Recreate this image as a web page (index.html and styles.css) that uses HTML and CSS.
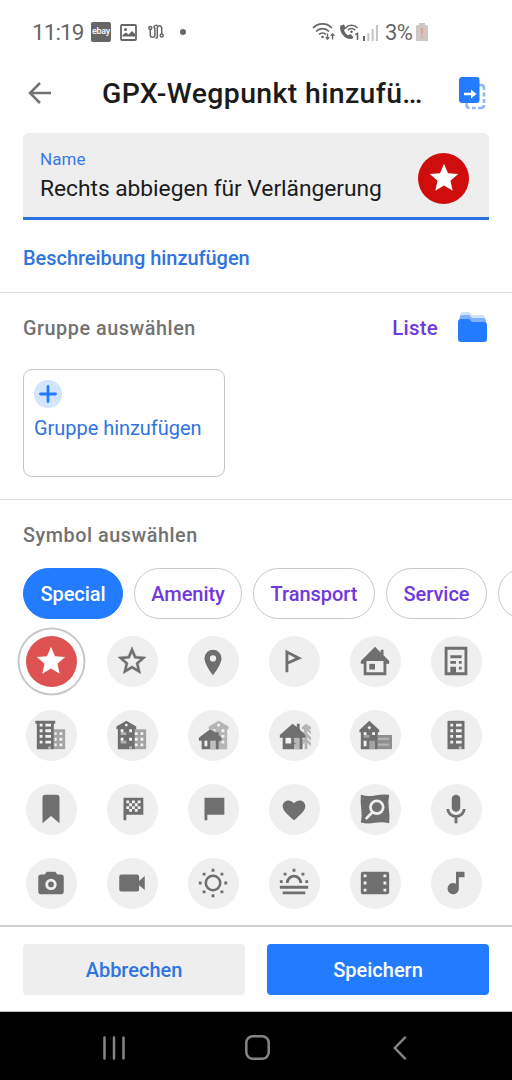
FILE: index.html
```html
<!DOCTYPE html>
<html lang="de">
<head>
    <meta charset="UTF-8">
    <title>GPX-Wegpunkt hinzufügen</title>
    <link rel="stylesheet" href="styles.css">
</head>
<body>
    <div class="status">
        <span class="time">11:19</span>
        <span class="ebay">ebay</span>
        <svg class="s-img" width="17" height="17" viewBox="0 0 17 17"><rect x="1" y="1" width="15" height="15" rx="1" fill="none" stroke="#666" stroke-width="1.8"/><circle cx="5.500" cy="5.500" r="1.500" fill="#666"/><path d="M2.500 12.500V11L6 8.500 8.500 10.500 12 7l3 3v2.500z" fill="#666"/></svg>
        <svg class="s-route" width="16" height="16" viewBox="0 0 16 16" fill="none" stroke="#666" stroke-width="1.500"><circle cx="2.300" cy="4" r="1.500"/><circle cx="13.700" cy="11.500" r="1.500"/><path d="M2.300 5.500v5.500a2.300 2.300 0 0 0 4.600 0V4.500L5.700 2.800M5.700 2.800Q7 1 9.300 1.200M9.300 14V4a2.200 2.200 0 0 1 4.400 0v6M9.300 14H7.500"/></svg>
        <i class="dot"></i>
        <svg class="s-wifi" width="24" height="18" viewBox="0 0 24 18" fill="none" stroke="#666" stroke-width="1.700"><path d="M1 5a13 13 0 0 1 19 0M4 8.500a9 9 0 0 1 13 0M7 11.500a5 5 0 0 1 7 0"/><circle cx="10.500" cy="14" r="1.300" fill="#666" stroke="none"/><path d="M15.500 10.500v5.500M13.700 14.200l1.800 1.900 1.800-1.900M20.500 16.500v-5.500M18.700 12.800l1.800-1.900 1.800 1.900" stroke-width="1.300"/></svg>
        <svg class="s-call" width="21" height="18" viewBox="0 0 21 18"><path d="M1.500 2.500C-.5 9 6 17 13 16l1.500-2-3-3-2.500 1.200C7 11 5.500 9 5 7l2-1.500L5 1.500z" fill="#666"/><path d="M6.500 5a8 8 0 0 1 12 0M8.800 7.200a5 5 0 0 1 7.400 0" fill="none" stroke="#666" stroke-width="1.500"/><circle cx="12.500" cy="8.800" r="1.300" fill="#666"/><path d="M16.200 11.700l2.300-1.200V17" fill="none" stroke="#666" stroke-width="1.500"/></svg>
        <svg class="s-bars" width="15" height="17" viewBox="0 0 15 17" fill="#c4c4c4"><path d="M0 12h2v5H0z" fill="#666"/><path d="M4.300 9h2v8h-2zM8.600 5h2v12h-2zM12.900 1h2v16h-2z"/></svg>
        <span class="percent">3%</span>
        <svg class="s-batt" width="12" height="18" viewBox="0 0 12 18"><path d="M3 2V0h6v2h1.500Q12 2 12 3.500V18H0V3.500Q0 2 1.500 2z" fill="#cbc8c6"/><path d="M5 5h2v6H5zM5 12.500h2v2H5z" fill="#ee9b8c"/></svg>
    </div>

    <div class="appbar">
        <svg class="back" width="24" height="22" viewBox="0 0 24 22" fill="none" stroke="#727272" stroke-width="2.500"><path d="M23 11H2M12 1L2 11l10 10"/></svg>
        <h1>GPX-Wegpunkt hinzufü…</h1>
        <svg class="swap" width="27" height="33" viewBox="0 0 27 33"><path d="M20 8h2q3 0 3 3v2M25 15.500v4M25 22v4M25 28q0 3-3 3h-3M16.500 31h-3.500M10.500 31Q7.500 31 7.500 28v-2" fill="none" stroke="#8fb9f7" stroke-width="2.600"/><rect x="0" y="0" width="20.500" height="26" rx="3" fill="#237bff"/><path d="M5 17h9" stroke="#fff" stroke-width="2.500"/><path d="M12 12.500l5.500 4.500-5.500 4.500z" fill="#fff"/></svg>
    </div>

    <div class="field">
        <div class="field-text">
            <label>Name</label>
            <p>Rechts abbiegen für Verlängerung</p>
        </div>
        <div class="badge"><svg class="ico" viewBox="0 0 24 24"><path d="M12 17.270L18.180 21l-1.640-7.030L22 9.240l-7.190-.61L12 2 9.190 8.630 2 9.240l5.460 4.730L5.820 21z" fill="#fff"/></svg></div>
    </div>
    <a class="describe">Beschreibung hinzufügen</a>

    <div class="group">
        <div class="group-head">
            <h2>Gruppe auswählen</h2>
            <a class="list">Liste</a>
            <svg class="folder" width="29" height="30" viewBox="0 0 29 30"><path d="M2 10V3q0-3 3-3h6l3 3h10q3 0 3 3v5z" fill="#cfe2fd"/><path d="M1.500 12V6q0-3 3-3H11l3 3h11q3 0 3 3v4z" fill="#7eb0fb"/><path d="M0 10q0-3 3-3h8l3 3h12q3 0 3 3v14q0 3-3 3H3q-3 0-3-3z" fill="#237bff"/></svg>
        </div>
        <div class="add-card">
            <svg class="plus" width="28" height="28" viewBox="0 0 28 28"><circle cx="14" cy="14" r="14" fill="#d3e4fd"/><path d="M14 6.500v15M6.500 14h15" stroke="#237bff" stroke-width="2.800" stroke-linecap="round"/></svg>
            <span>Gruppe hinzufügen</span>
        </div>
    </div>

    <div class="symbols">
        <h2>Symbol auswählen</h2>
        <div class="chips">
            <span class="chip c1 active">Special</span>
            <span class="chip c2">Amenity</span>
            <span class="chip c3">Transport</span>
            <span class="chip c4">Service</span>
            <span class="chip c5"></span>
        </div>
        <div class="grid">
            <!-- star, star outline, pin, flag outline, house, building -->
            <div class="cell selected"><svg class="ico" viewBox="0 0 24 24"><path d="M12 17.270L18.180 21l-1.640-7.030L22 9.240l-7.190-.61L12 2 9.190 8.630 2 9.240l5.460 4.730L5.820 21z"/></svg></div>
            <div class="cell"><svg class="ico" viewBox="0 0 24 24"><path d="M22 9.240l-7.190-.62L12 2 9.190 8.630 2 9.240l5.460 4.730L5.820 21 12 17.270 18.180 21l-1.630-7.030L22 9.240zM12 15.400l-3.760 2.270 1-4.280-3.320-2.880 4.380-.38L12 6.100l1.710 4.040 4.380.38-3.320 2.880 1 4.280L12 15.400z" stroke="#6f6f6f" stroke-width=".3"/></svg></div>
            <div class="cell"><svg class="ico" viewBox="0 0 24 24"><path fill-rule="evenodd" d="M12 4a6 6 0 0 0-6 6c0 4.500 6 12 6 12s6-7.500 6-12a6 6 0 0 0-6-6zM12 8a2.200 2.200 0 1 1 0 4.400 2.200 2.200 0 0 1 0-4.400z"/></svg></div>
            <div class="cell"><svg class="ico" viewBox="0 0 24 24"><path fill-rule="evenodd" d="M6 4v16h2v-5.700L17.700 10zM8 7.200v4.900l5-2.200z"/></svg></div>
            <div class="cell"><svg class="ico" viewBox="0 0 24 24"><path fill-rule="evenodd" d="M12 2l4 4V4h2v4l4 4v2h-2v8H4v-8H2v-2zM6 12v8h12v-8z"/><path d="M8 14h4v4H8z"/></svg></div>
            <div class="cell"><svg class="ico" viewBox="0 0 24 24"><path fill-rule="evenodd" d="M4 2h16v20H4zM6 4v16h2v-4h4v4h6V4z"/><path d="M8 8h8v2H8zM8 12h4v2H8zM14 12h2v2h-2zM14 16h2v2h-2z"/></svg></div>

            <!-- town buildings -->
            <div class="cell"><svg class="ico" viewBox="0 0 24 24"><path d="M14 8h8v14h-8z" opacity=".6"/><path d="M1 2h14v2h-1v18H2V4H1z"/><path class="win" d="M4 4h2v2H4zM4 8h2v2H4zM4 12h2v2H4zM4 16h2v2H4zM8 4h4v2H8zM8 8h4v2H8zM8 12h4v2H8zM8 16h4v2H8zM14.500 10h1.500v2h-1.500zM14.500 14h1.500v2h-1.500zM14.500 18h1.500v2h-1.500zM18 10h2v2h-2zM18 14h2v2h-2zM18 18h2v2h-2z"/><path class="win" d="M10 20h2v2h-2z" opacity=".5"/></svg></div>
            <div class="cell"><svg class="ico" viewBox="0 0 24 24"><path d="M14 8h8v14h-8z" opacity=".6"/><path d="M8 2l7 4v2h-1v14H2V8H1V6z"/><circle class="win" cx="8" cy="5" r="1"/><path class="win" d="M4 8h2v2H4zM10 8h2v2h-2zM4 14h2v2H4zM10 14h2v2h-2zM14 10h2v2h-2zM14 14h2v2h-2zM14 18h2v2h-2zM18 10h2v2h-2zM18 14h2v2h-2zM18 18h2v2h-2z"/><path class="win" d="M6 8h0v2h2v2H4v-2h2zM6 14v2h2v2H4v-2h2zM10 20h2v2h-2z" opacity=".5"/></svg></div>
            <div class="cell"><svg class="ico" viewBox="0 0 24 24"><path d="M16 2l7 4v2h-1v14H11V8H9V6z" opacity=".45"/><circle class="win" cx="16" cy="5" r="1.100"/><path class="win" d="M12 8h2v1h-2zM18 8h2v2h-2zM18 12h2v2h-2zM18 16h2v2h-2z"/><path d="M10 8l4 2.500V10h2v2l2 2v2h-2v6H4v-6H2v-2z"/><path class="win" d="M6 16h2v4H6z"/><path class="win" d="M10 16h4v6h-4z" opacity=".6"/></svg></div>
            <div class="cell"><svg class="ico" viewBox="0 0 24 24"><path d="M20.500 4L17.500 6.500V8H19v1.500l-1.500 1.500 2 2v1.500L18 15v4l1.500-1.500V22h2v-4.500L24 20v-2.500l-2.500-2.500v-1.500L24 16v-2.500L21.500 11V9l2.500 2.500V9.500L22.500 8H24V6.500z" opacity=".45"/><path d="M11 4l3 2.300V4h2v4l4 4v2h-2v8H4v-8H2v-2z"/><path class="win" d="M6 14h4v4H6z"/><path class="win" d="M12 14h4v8h-4z" opacity=".55"/><path d="M12 17.500h1v1h-1z"/></svg></div>
            <div class="cell"><svg class="ico" viewBox="0 0 24 24"><path d="M14 12h10v10H14z" opacity=".75"/><path class="win" d="M14 14h8v1.500h-8zM14 18h8v1.500h-8z" opacity=".35"/><path d="M8 2l7 6.500V10h-1v12H2V10H1V8.500z"/><path class="win" d="M8 5.500l1.300 1.300L8 8.100 6.700 6.800zM4 10h2v2H4zM10 10h2v2h-2zM4 16h2v4H4z"/><path class="win" d="M6 10v2H4v2h4v-2H6zM8 16h4v6H8z" opacity=".4"/></svg></div>
            <div class="cell"><svg class="ico" viewBox="0 0 24 24"><path d="M6 2h12v20H6z"/><path class="win" d="M8 4h2v2H8zM8 8h2v2H8zM8 12h2v2H8zM8 16h2v2H8zM12 4h4v2h-4zM12 8h4v2h-4zM12 12h4v2h-4zM12 16h4v2h-4z"/><path class="win" d="M14 20h2v2h-2z" opacity=".6"/></svg></div>

            <!-- bookmark, flags, heart, search, microphone -->
            <div class="cell"><svg class="ico" viewBox="0 0 24 24"><path d="M8 2h8q2 0 2 2v18l-6-5-6 5V4q0-2 2-2z"/></svg></div>
            <div class="cell"><svg class="ico" viewBox="0 0 24 24"><path d="M6 4h14v12H8v4H6z"/><path class="win" d="M8 6h2v2H8zM12 6h2v2h-2zM16 6h2v2h-2zM10 8h2v2h-2zM14 8h2v2h-2zM8 10h2v2H8zM12 10h2v2h-2zM16 10h2v2h-2zM10 12h2v2h-2zM14 12h2v2h-2z"/></svg></div>
            <div class="cell"><svg class="ico" viewBox="0 0 24 24"><path d="M6 4h14v12H8v4H6z"/></svg></div>
            <div class="cell"><svg class="ico" viewBox="0 0 24 24"><path d="M12 20C7 15.500 4 13 4 10c0-2.300 1.800-4 4-4 1.500 0 3 .8 4 2 1-1.200 2.500-2 4-2 2.200 0 4 1.700 4 4 0 3-3 5.500-8 10z"/></svg></div>
            <div class="cell"><svg class="ico" viewBox="0 0 24 24"><path d="M2 2q5 1.500 10 .5T22 2q-1 5-.2 10T22 22q-5-1.300-10-.3T2 21.500q1-5 .3-9.500T2 2z"/><path class="line" d="M10 14.500L6 18.500" stroke-linecap="round"/><circle class="line" cx="13.300" cy="10.800" r="4.500"/></svg></div>
            <div class="cell"><svg class="ico" viewBox="0 0 24 24"><rect x="9" y="2" width="6" height="12" rx="3"/><path class="dark" d="M6.200 12a5.800 5.300 0 0 0 11.600 0M12 17.500V22"/></svg></div>

            <!-- camera, video, sun, sunset, film, note -->
            <div class="cell"><svg class="ico" viewBox="0 0 24 24"><path fill-rule="evenodd" d="M9 4h6l1.500 2H19q2 0 2 2v10q0 2-2 2H5q-2 0-2-2V8q0-2 2-2h2.500zM12 9a4 4 0 1 0 0 8 4 4 0 0 0 0-8z"/><circle cx="12" cy="13" r="2"/></svg></div>
            <div class="cell"><svg class="ico" viewBox="0 0 24 24"><path d="M17 10.500V7.500q0-1.500-1.500-1.500h-11Q3 6 3 7.500v9Q3 18 4.500 18h11q1.500 0 1.500-1.500v-3l4 3.500V7z"/></svg></div>
            <div class="cell"><svg class="ico" viewBox="0 0 24 24"><circle class="dark thin" cx="12" cy="12" r="5.100"/><path d="M11 2h2v2h-2zM11 20h2v2h-2zM2 11h2v2H2zM20 11h2v2h-2zM4.700 4.700h2v2h-2zM17.300 4.700h2v2h-2zM4.700 17.300h2v2h-2zM17.300 17.300h2v2h-2z"/></svg></div>
            <div class="cell"><svg class="ico" viewBox="0 0 24 24"><path class="dark" d="M7.200 12a4.800 4.800 0 0 1 9.600 0"/><path d="M2 14h20v2H2zM4 18h16v2H4zM11 2h2v2h-2zM4.700 4.700h2v2h-2zM17.300 4.700h2v2h-2zM2 10h2v2H2zM20 10h2v2h-2z"/></svg></div>
            <div class="cell"><svg class="ico" viewBox="0 0 24 24"><rect x="2" y="4" width="20" height="16" rx="1.500"/><path class="win" d="M4 6h2v2H4zM4 11h2v2H4zM4 16h2v2H4zM18 6h2v2h-2zM18 11h2v2h-2zM18 16h2v2h-2z"/></svg></div>
            <div class="cell"><svg class="ico" viewBox="0 0 24 24"><path d="M12 4h6v4h-4v8a4 4 0 1 1-2-3.460z"/></svg></div>
        </div>
    </div>

    <div class="actions">
        <button class="cancel">Abbrechen</button>
        <button class="save">Speichern</button>
    </div>

    <div class="navbar">
        <svg width="24" height="24" viewBox="0 0 24 24" fill="none" stroke="#858585" stroke-width="2.500" stroke-linecap="round"><path d="M2.500 1.500v21M12 1.500v21M21.500 1.500v21"/></svg>
        <svg class="home" width="25" height="25" viewBox="0 0 25 25" fill="none" stroke="#858585" stroke-width="2.500"><rect x="1.300" y="1.300" width="22.400" height="22.400" rx="6.500"/></svg>
        <svg width="14" height="24" viewBox="0 0 14 24" fill="none" stroke="#858585" stroke-width="2.500" stroke-linecap="round"><path d="M12 1.500L1.800 12 12 22.500"/></svg>
    </div>
</body>
</html>
```
FILE: styles.css
```css
* {
    margin: 0;
    padding: 0;
    box-sizing: border-box;
}
body {
    width: 512px;
    height: 1080px;
    overflow: hidden;
    display: flex;
    flex-direction: column;
    background-color: #fff;
    font-family: Roboto, "Liberation Sans", sans-serif;
    color: #1b1b1b;
}
svg {
    display: block;
    flex: none;
}
h1, h2 {
    font-weight: 500;
    white-space: nowrap;
}
.status {
    height: 64px;
    padding-left: 32px;
    display: flex;
    align-items: center;
    color: #666;
    font-size: 22px;
}
.time {
    width: 59px;
    font-size: 22.5px;
    letter-spacing: -.9px;
}
.ebay {
    width: 20px;
    height: 20px;
    border-radius: 2px;
    background-color: #666;
    color: #fff;
    font-size: 9px;
    font-weight: 500;
    line-height: 18px;
    text-align: center;
    letter-spacing: -.3px;
}
.s-img {
    margin-left: 9px;
}
.s-route {
    margin-left: 11px;
}
.dot {
    width: 6px;
    height: 6px;
    margin-left: 16px;
    border-radius: 50%;
    background-color: #666;
}
.s-wifi {
    margin-left: 126px;
}
.s-call {
    margin-left: 3px;
}
.s-bars {
    margin-left: 3px;
}
.percent {
    width: 30px;
    margin-left: 7px;
    letter-spacing: -.6px;
}
.s-batt {
    margin-left: 1px;
}
.appbar {
    height: 69px;
    padding: 0 26px 10px 28px;
    display: flex;
    align-items: center;
}
.appbar .back {
    margin-top: -2px;
}
.appbar h1 {
    flex: 1;
    margin-left: 50px;
    font-size: 28.4px;
    line-height: 40px;
    letter-spacing: .38px;
}
.field {
    height: 87px;
    margin: 0 23px;
    padding: 15px 20px 0 17px;
    display: flex;
    justify-content: space-between;
    border-bottom: 3px solid #2a73e0;
    border-radius: 6px 6px 0 0;
    background-color: #eee;
}
.field label {
    display: block;
    font-size: 17px;
    line-height: 22px;
    letter-spacing: .1px;
    color: #3a7ae0;
}
.field p {
    font-size: 22.8px;
    line-height: 38px;
    letter-spacing: -.04px;
    white-space: nowrap;
}
.badge {
    width: 51px;
    height: 51px;
    margin-top: 4.5px;
    border-radius: 50%;
    background-color: #d00d0d;
}
.ico {
    width: 34px;
    height: 34px;
    margin: 8.5px;
    fill: #6f6f6f;
}
.describe {
    height: 72px;
    padding-left: 23px;
    font-size: 20px;
    font-weight: 500;
    line-height: 77px;
    letter-spacing: -.04px;
    color: #2f74e0;
}
.group {
    height: 208px;
    padding: 0 23px;
    border-top: 1px solid #dedede;
    border-bottom: 1px solid #dedede;
}
.group-head {
    height: 75.5px;
    padding-right: 2px;
    display: flex;
    align-items: center;
}
.group h2,
.symbols h2 {
    font-size: 19.8px;
    line-height: 24px;
    letter-spacing: .55px;
    color: #727272;
}
.group h2 {
    flex: 1;
    margin-top: -4px;
}
.list {
    margin: -6px 20px 0 0;
    font-size: 20.5px;
    font-weight: 500;
    letter-spacing: .2px;
    color: #7038de;
}
.folder {
    margin-top: -7px;
}
.add-card {
    width: 202px;
    height: 108px;
    padding: 10px 10px;
    border: 1px solid #c6c6c6;
    border-radius: 9px;
    font-size: 20px;
    line-height: 24px;
    letter-spacing: -.04px;
    white-space: nowrap;
    color: #2f74e0;
}
.plus {
    margin-bottom: 8px;
}
.symbols {
    height: 425px;
    padding-top: 24px;
    overflow: hidden;
}
.symbols h2 {
    margin-left: 23px;
}
.chips {
    margin: 19.5px 0 0 23px;
    display: flex;
    gap: 11px;
}
.chip {
    flex: none;
    height: 51px;
    border: 1.5px solid #c8c8c8;
    border-radius: 26px;
    font-size: 20px;
    font-weight: 500;
    line-height: 50px;
    letter-spacing: -.05px;
    text-align: center;
    color: #7038de;
}
.c1 { width: 100px; }
.c2 { width: 108px; }
.c3 { width: 122px; }
.c4 { width: 101px; }
.c5 { width: 110px; }
.active {
    border-color: #237bff;
    background-color: #237bff;
    color: #fff;
}
.grid {
    margin: 17px 0 0 25.5px;
    display: grid;
    grid-template-columns: repeat(6, 51px);
    gap: 23px 30px;
}
.cell {
    height: 51px;
    border-radius: 50%;
    background-color: #efefef;
}
.selected {
    background-color: #de5252;
    box-shadow: 0 0 0 6.5px #fff, 0 0 0 8.5px #c8c8c8;
}
.selected .ico {
    fill: #fff;
}
.ico .win {
    fill: #f3f3f3;
}
.line {
    fill: none;
    stroke: #efefef;
    stroke-width: 1.9;
}
.dark {
    fill: none;
    stroke: #6f6f6f;
    stroke-width: 2;
}
.thin {
    stroke-width: 1.8;
}
.actions {
    height: 87px;
    padding: 17px 23px 0;
    display: flex;
    gap: 22px;
    border-top: 2px solid #cfcfcf;
    border-bottom: 1px solid #bbb;
}
.actions button {
    flex: 1;
    height: 51px;
    border: 0;
    border-radius: 4px;
    font-family: inherit;
    font-size: 20px;
    font-weight: 500;
}
.cancel {
    background-color: #eee;
    color: #2f74e0;
}
.save {
    background-color: #237bff;
    color: #fff;
}
.navbar {
    height: 68px;
    padding: 4px 105px 0 102px;
    display: flex;
    align-items: center;
    justify-content: space-between;
    background-color: #000;
}
.home {
    margin: -1px 5px 0 0;
}
```
